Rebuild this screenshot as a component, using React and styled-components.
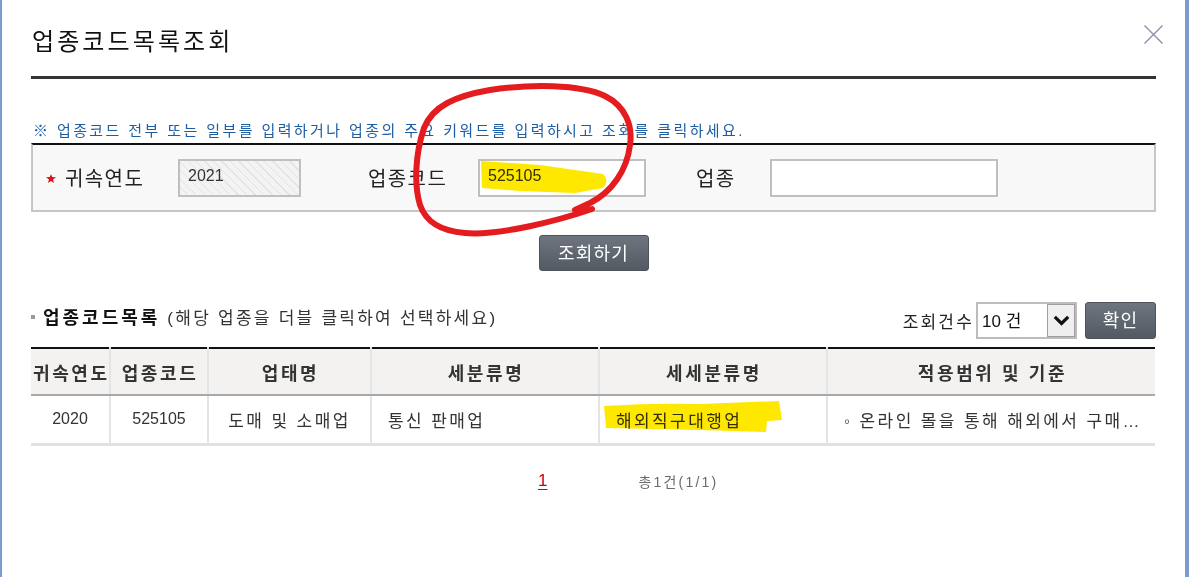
import React from 'react';
import styled, { createGlobalStyle } from 'styled-components';

const Global = createGlobalStyle`
  html, body { margin: 0; padding: 0; background: #fff; }
  body { font-family: "Liberation Sans", "Noto Sans CJK KR", sans-serif; color: #222; }
  * { box-sizing: border-box; }
`;

const Frame = styled.div`
  position: relative;
  width: 1189px;
  height: 577px;
  overflow: hidden;
  background: #fff;
  border-left: 2px solid #7a9dcf;
  border-right: 4px solid #7a9dcf;
  padding: 0 29px;
`;

const Header = styled.header`
  display: flex;
  justify-content: space-between;
  align-items: flex-start;
  height: 79px;
  border-bottom: 3px solid #333;
`;

const Title = styled.h1`
  margin: 28px 0 0 1px;
  font-size: 24px;
  line-height: 28px;
  font-weight: normal;
  letter-spacing: 3.1px;
  color: #111;
`;

const Close = styled.button`
  margin: 24px -8px 0 0;
  padding: 0;
  width: 21px;
  height: 21px;
  border: 0;
  background: transparent;
  display: flex;
`;

const Notice = styled.p`
  margin: 42px 0 0 2px;
  font-size: 15px;
  line-height: 20px;
  letter-spacing: 2.4px;
  color: #1d5ea3;
`;

const SearchBox = styled.div`
  margin-top: 2px;
  width: 1125px;
  height: 69px;
  display: flex;
  align-items: center;
  background: #f8f8f8;
  border: 2px solid #c6c6c6;
  border-top-color: #111;
  padding-left: 13px;
`;

const Star = styled.svg`
  width: 10px;
  height: 9px;
  flex: none;
  margin-right: 9px;
  margin-top: 2px;
`;

const Label = styled.span`
  flex: none;
  width: ${p => p.$w}px;
  margin-left: ${p => p.$ml || 0}px;
  font-size: 20px;
  letter-spacing: 1.4px;
  color: #222;
`;

const Input = styled.input`
  flex: none;
  width: ${p => p.$w}px;
  height: 38px;
  border: 2px solid #bfbfbf;
  padding: 0 0 3px 8px;
  font-family: "Liberation Sans", sans-serif;
  font-size: 16px;
  color: #333;
  outline: none;
  background: ${p => p.readOnly
    ? 'repeating-linear-gradient(45deg, #f3f3f3 0 5px, #e2e2e2 5px 6px)'
    : '#fff'};
`;

const ButtonRow = styled.div`
  display: flex;
  justify-content: center;
  margin-top: 23px;
`;

const DarkButton = styled.button`
  width: ${p => p.$w}px;
  height: ${p => p.$h}px;
  border: 1px solid #4e535a;
  border-radius: 3px;
  background: linear-gradient(#6f757e, #545a63);
  color: #fff;
  font-family: "Liberation Sans", "Noto Sans CJK KR", sans-serif;
  font-size: 18px;
  letter-spacing: 1.2px;
  padding: 0 0 3px;
  cursor: pointer;
`;

const ListBar = styled.div`
  margin-top: 31px;
  height: 37px;
  display: flex;
  align-items: center;
  justify-content: space-between;
`;

const SectionTitle = styled.div`
  display: flex;
  align-items: center;
  margin-bottom: 9px;
`;

const Bullet = styled.span`
  width: 4px;
  height: 4px;
  background: #9a9a9a;
  margin: 2px 8px 0 0;
`;

const Strong = styled.strong`
  font-size: 18px;
  letter-spacing: 3px;
  color: #111;
  margin-right: 7px;
`;

const Hint = styled.span`
  font-size: 17px;
  letter-spacing: 2.25px;
  color: #333;
`;

const Controls = styled.div`
  display: flex;
  align-items: center;
`;

const CountLabel = styled.span`
  font-size: 17px;
  letter-spacing: 2.2px;
  color: #222;
  margin-right: 2px;
`;

const SelectBox = styled.div`
  width: 101px;
  height: 37px;
  display: flex;
  align-items: stretch;
  border: 2px solid #bdbdbd;
  background: #fff;
  margin-right: 8px;
`;

const SelectValue = styled.span`
  flex: 1;
  display: flex;
  align-items: center;
  padding: 0 0 2px 4px;
  font-size: 17px;
  color: #111;
`;

const ArrowBox = styled.span`
  width: 28px;
  display: flex;
  align-items: center;
  justify-content: center;
  background: #efefef;
  border: 1px solid #9e9e9e;
`;

const Table = styled.table`
  margin-top: 8px;
  width: 1124px;
  border-collapse: collapse;
  table-layout: fixed;
  border-top: 2px solid #111;
`;

const Th = styled.th`
  height: 47px;
  padding: 0;
  background: #f3f2f0;
  border-bottom: 2px solid #a8a8a8;
  border-left: 2px solid #e4e4e4;
  &:first-child { border-left: 0; }
  font-size: 18px;
  font-weight: bold;
  letter-spacing: 2.6px;
  color: #333;
  text-align: center;
  white-space: nowrap;
  overflow: hidden;
  text-indent: 2px;
`;

const Td = styled.td`
  height: 49px;
  padding: 0 0 0 ${p => (p.$align === 'left' ? 16 : 0)}px;
  border-bottom: 3px solid #e1e1e1;
  border-left: 2px solid #e4e4e4;
  &:first-child { border-left: 0; }
  font-size: ${p => (p.$num ? 16 : 17)}px;
  letter-spacing: ${p => (p.$num ? 0 : 2.4)}px;
  color: #333;
  text-align: ${p => p.$align || 'center'};
  white-space: nowrap;
  overflow: hidden;
`;

const Pager = styled.div`
  margin-top: 25px;
  display: flex;
  align-items: center;
  padding-left: 507px;
  gap: 91px;
`;

const PageLink = styled.a`
  font-size: 17px;
  color: #d00000;
  text-decoration: underline;
  text-underline-offset: 3px;
`;

const Total = styled.span`
  font-size: 14px;
  letter-spacing: 2.2px;
  color: #6b6b6b;
`;

const Highlights = styled.svg`
  position: absolute;
  top: 0;
  left: -2px;
  width: 1189px;
  height: 577px;
  pointer-events: none;
  mix-blend-mode: multiply;
`;

const Pen = styled.svg`
  position: absolute;
  top: 0;
  left: -2px;
  width: 1189px;
  height: 577px;
  pointer-events: none;
`;

const cols = [79, 98, 163, 228, 228, 328];

export default function App() {
  return (
    <>
      <Global />
      <Frame>
        <Header>
          <Title>업종코드목록조회</Title>
          <Close aria-label="닫기">
            <svg width="21" height="21" viewBox="0 0 21 21">
              <path d="M1.5 1.5 L19.5 19.5 M19.5 1.5 L1.5 19.5" stroke="#8b90a8" strokeWidth="1.4" fill="none" />
            </svg>
          </Close>
        </Header>

        <Notice>※ 업종코드 전부 또는 일부를 입력하거나 업종의 주요 키워드를 입력하시고 조회를 클릭하세요.</Notice>

        <SearchBox>
          <Star viewBox="0 0 10 9">
            <path d="M5 0 L6.2 3.1 L10 3.3 L7 5.4 L8.1 9 L5 6.9 L1.9 9 L3 5.4 L0 3.3 L3.8 3.1 Z" fill="#d8141c" />
          </Star>
          <Label $w={113}>귀속연도</Label>
          <Input $w={123} readOnly value="2021" />
          <Label $w={110} $ml={67}>업종코드</Label>
          <Input $w={168} defaultValue="525105" />
          <Label $w={74} $ml={50}>업종</Label>
          <Input $w={228} defaultValue="" />
        </SearchBox>

        <ButtonRow>
          <DarkButton $w={110} $h={36}>조회하기</DarkButton>
        </ButtonRow>

        <ListBar>
          <SectionTitle>
            <Bullet />
            <Strong>업종코드목록</Strong>
            <Hint>(해당 업종을 더블 클릭하여 선택하세요)</Hint>
          </SectionTitle>
          <Controls>
            <CountLabel>조회건수</CountLabel>
            <SelectBox>
              <SelectValue>10 건</SelectValue>
              <ArrowBox>
                <svg width="17" height="11" viewBox="0 0 17 11">
                  <path d="M1.8 1.8 L8.5 8.5 L15.2 1.8" stroke="#111" strokeWidth="3.2" fill="none" />
                </svg>
              </ArrowBox>
            </SelectBox>
            <DarkButton $w={71} $h={37}>확인</DarkButton>
          </Controls>
        </ListBar>

        <Table>
          <colgroup>
            {cols.map((w, i) => <col key={i} style={{ width: w }} />)}
          </colgroup>
          <thead>
            <tr>
              <Th>귀속연도</Th>
              <Th>업종코드</Th>
              <Th>업태명</Th>
              <Th>세분류명</Th>
              <Th>세세분류명</Th>
              <Th>적용범위 및 기준</Th>
            </tr>
          </thead>
          <tbody>
            <tr>
              <Td $num>2020</Td>
              <Td $num>525105</Td>
              <Td>도매 및 소매업</Td>
              <Td $align="left">통신 판매업</Td>
              <Td $align="left">해외직구대행업</Td>
              <Td $align="left">◦ 온라인 몰을 통해 해외에서 구매…</Td>
            </tr>
          </tbody>
        </Table>

        <Pager>
          <PageLink href="#">1</PageLink>
          <Total>총1건(1/1)</Total>
        </Pager>

        <Highlights viewBox="0 0 1189 577">
          <path d="M481 161 L540 165 L603 174 Q610 181 603 188 L575 193 L520 191 L482 188 Z" fill="#ffe800" />
          <path d="M604 406 Q650 403 700 404 L779 401 L782 420 L767 421 L766 432 L700 430 L606 428 Z" fill="#ffe800" />
        </Highlights>

        <Pen viewBox="0 0 1189 577">
          <path
            d="M592 209 C560 220 500 236 465 233 C440 231 426 222 420 205 C414 185 415 155 424 128 C433 106 455 96 490 90 C530 84 580 84 605 96 C625 106 633 125 630 145 C627 170 612 192 590 203 L575 210"
            stroke="#e41b1f"
            strokeWidth="6"
            strokeLinecap="round"
            strokeLinejoin="round"
            fill="none"
          />
        </Pen>
      </Frame>
    </>
  );
}
